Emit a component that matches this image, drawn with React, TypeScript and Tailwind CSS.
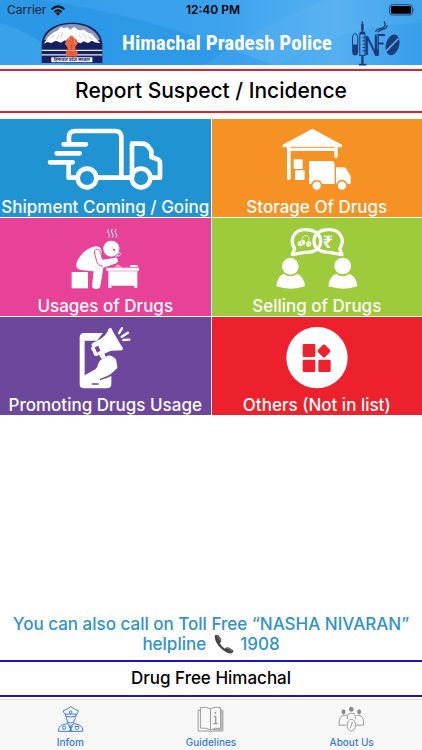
import type { ReactNode } from "react";

function StatusBar() {
  return (
    <div className="grid h-5 grid-cols-3 items-center px-[7px] text-xs leading-5 text-[#14202c]">
      <div className="flex items-center gap-[5px]">
        <span>Carrier</span>
        <svg viewBox="0 0 42 33" className="h-[11px] w-[14px]" fill="none" stroke="#111" strokeWidth="6" aria-hidden="true">
          <path d="M2 13 Q21 -5 40 13" />
          <path d="M10 21 Q21 11 32 21" />
          <path d="M14 25 Q21 19 28 25 L21 32Z" fill="#111" stroke="none" />
        </svg>
      </div>
      <span className="pl-1 text-center font-semibold text-black">12:40 PM</span>
      <svg viewBox="0 0 78 36" className="h-3 w-[26px] justify-self-end" aria-hidden="true">
        <rect x="2" y="2" width="68" height="31" rx="8" fill="none" stroke="#1c4a70" strokeWidth="3" />
        <rect x="6" y="6" width="60" height="23" rx="4" fill="#000" />
        <path d="M73 12 Q78 17 73 23Z" fill="#1c4a70" />
      </svg>
    </div>
  );
}

function Emblem() {
  return (
    <svg viewBox="124 61 187 123" className="h-[41px] w-[62px]" role="img" aria-label="Himachal Pradesh emblem">
      <path d="M126 184 V128 C128 84 170 63 218 63 C267 63 307 85 309 128 V184Z" fill="#17205f" />
      <path d="M133 116 C142 84 178 67 218 67 C258 67 293 86 302 116Z" fill="#8c95b6" />
      <path d="M132 127 L145 107 L154 98 L164 91 L173 87 L184 75 L193 79 L204 77 L213 84 L224 75 L235 84 L245 86 L253 83 L266 93 L277 96 L289 110 L303 125 L286 122 L277 117 L266 124 L253 119 L244 125 L230 120 L218 126 L196 116 L184 123 L169 117 L155 124 L143 121Z" fill="#fff" />
      <path d="M155 108 L164 101 M170 112 L181 98 M183 109 L190 90 M237 99 L246 109 M249 93 L262 111 M267 105 L280 114" stroke="#a9b0c8" strokeWidth="2" />
      <path d="M126 146 H309 M126 160 H309" stroke="#e8edff" strokeWidth="4" />
      <path d="M199 165 V149 L205 143 L201 132 L196 127 L200 114 L208 109 L212 102 H219 L224 109 L232 114 L235 126 L229 133 L227 144 L234 150 V165Z" fill="#ef653e" />
      <path d="M204 117 L210 124 M228 116 L222 124 M207 132 H226 M212 108 V120 M220 109 V120 M203 152 H230 M208 158 H225 M216 130 V145" stroke="#c04d35" strokeWidth="2" />
      <path d="M208 112 L213 116 M224 116 L227 126 M206 126 V132 M208 147 H225" stroke="#ffc0a1" strokeWidth="2" />
      <rect x="155" y="167" width="124" height="15" fill="#f2f5ff" />
      <text x="217" y="179" textAnchor="middle" fontSize="13" fontWeight="700" fill="#17205f" className="font-['Noto_Sans_Devanagari','Noto_Sans',sans-serif]">हिमाचल प्रदेश सरकार</text>
    </svg>
  );
}

function InfoLogo() {
  return (
    <svg viewBox="421 57 147 139" className="h-[46px] w-[49px]" role="img" aria-label="Info" fill="none" stroke="#1b3b79">
      <path d="M425 132 V111 C425 94 441 94 441 111 V132" strokeWidth="3" />
      <path d="M424 131 H442 V153 C442 168 424 168 424 153Z" fill="#1b3b79" stroke="none" />
      <path d="M455 61 V94" strokeWidth="4" />
      <path d="M455 69 V89 M447 96 H463 M455 165 V190" strokeWidth="7" />
      <rect x="447" y="99" width="16" height="65" strokeWidth="3" />
      <path d="M455 110 H463 M455 120 H463 M455 130 H463 M455 140 H463 M455 150 H463" strokeWidth="3" />
      <path d="M444 192 H467" strokeWidth="5" />
      <text x="459" y="164" fontSize="76" fontWeight="400" fill="#1b3b79" stroke="none" className="font-['Roboto_Condensed',sans-serif]">N</text>
      <path d="M494 102 H503 V164 H494Z" strokeWidth="3" />
      <path d="M494 146 H503 V163 H494Z" fill="#1b3b79" />
      <path d="M503 102 H523 M503 128 H519" strokeWidth="6" />
      <path d="M495 93 C497 78 520 88 523 73 C526 64 518 68 522 61 M502 94 C507 82 531 88 529 73" strokeWidth="4" />
      <ellipse cx="546" cy="132" rx="20" ry="32" transform="rotate(15 546 132)" fill="#1b3b79" stroke="none" />
      <path d="M527 151 L564 113" stroke="#57b0ee" strokeWidth="5" />
    </svg>
  );
}

const tileIcon = "h-16 w-[120px] shrink-0";

function ShipmentIcon() {
  return (
    <svg viewBox="135 36 360 192" className={tileIcon} fill="none" stroke="#fff" strokeWidth="14" strokeLinecap="round" strokeLinejoin="round" aria-hidden="true">
      <path d="M207 84 V67 Q207 48 226 48 H345 Q364 48 364 67 V188 M191 88 H258 M170 115 H239 M150 142 H218 M206 142 V188 H230" />
      <path d="M294 188 H390 M396 188 V86 H425 Q440 86 448 99 L454 107 V126 L469 131 Q480 134 480 145 V188 H455" />
      <circle cx="261" cy="189" r="28" />
      <circle cx="423" cy="189" r="28" />
    </svg>
  );
}

function StorageIcon() {
  return (
    <svg viewBox="136 36 360 192" className={tileIcon} fill="#fff" aria-hidden="true">
      <path d="M302 41 L391 89 V97 H378 V126 Q373 133 368 126 V108 H237 V191 Q231 198 226 191 V97 H213 V89Z" />
      <path d="M237 97 H368" stroke="#f7932a" strokeWidth="3" />
      <rect x="246" y="133" width="27" height="29" rx="3" />
      <rect x="250" y="166" width="29" height="29" rx="3" />
      <path d="M295 138 H357 Q369 138 369 151 V207 H292 V141 Q292 138 295 138Z" />
      <path d="M373 157 H397 Q401 157 404 162 L417 183 V207 H373Z" />
      <g stroke="#f7932a" strokeWidth="5">
        <circle cx="315" cy="212" r="15" />
        <circle cx="391" cy="212" r="15" />
      </g>
    </svg>
  );
}

function UsageIcon() {
  return (
    <svg viewBox="135 33 360 192" className={tileIcon} fill="#fff" aria-hidden="true">
      <path d="M326 42 Q320 49 326 56 Q332 62 325 68 M337 42 Q331 49 337 56 Q343 62 336 68 M348 42 Q342 49 348 56 Q354 62 347 68" fill="none" stroke="#fff" strokeWidth="3" />
      <circle cx="334" cy="101" r="24" />
      <circle cx="342" cy="104" r="3" fill="#b53278" />
      <path d="M352 117 Q361 109 362 118 Q357 127 351 121 L345 131" fill="none" stroke="#fff" strokeWidth="3" />
      <path d="M289 94 C268 94 239 118 230 142 C225 158 234 165 247 166 L281 169 L276 214 Q278 222 289 222 Q299 222 301 214 L310 158 L349 145 Q357 138 352 131 Q347 126 338 130 L307 134 L304 104 Q299 94 289 94Z" />
      <path d="M283 111 C286 99 299 101 302 113 L307 132 M283 111 L290 139 Q293 151 309 154" stroke="#e8439a" strokeWidth="3" fill="none" />
      <rect x="215" y="171" width="49" height="49" />
      <path d="M319 158 H417 V168 H412 V219 H403 V212 H334 V219 H325 V168 H319Z" />
      <path d="M340 158 L353 148 L369 158Z" fill="#f7a6cf" />
      <path d="M325 168 H411 M374 157 H416" stroke="#ee80b8" strokeWidth="2" />
      <rect x="390" y="150" width="23" height="6" rx="2" />
    </svg>
  );
}

function SellingIcon() {
  return (
    <svg viewBox="136 33 360 192" className={tileIcon} fill="#fff" aria-hidden="true">
      <g fill="none" stroke="#fff" strokeWidth="10" strokeLinejoin="round">
        <path d="M281 44 C307 44 327 56 327 79 C327 103 304 114 280 112 L242 119 L249 101 C232 75 246 44 281 44Z" />
        <path d="M352 44 C326 44 307 56 307 79 C307 103 329 113 353 112 L391 119 L384 101 C402 75 387 44 352 44Z" />
      </g>
      <rect x="257" y="77" width="24" height="15" rx="7" transform="rotate(-25 269 84)" />
      <circle cx="291" cy="87" r="8" />
      <path d="M270 77 Q271 62 284 61 Q296 67 291 80" stroke="#fff" strokeWidth="2" fill="none" />
      <path d="M268 78 L273 91 M284 87 H298" stroke="#9bca3b" strokeWidth="2" />
      <text x="349" y="100" textAnchor="middle" fontSize="54" fontWeight="700" className="font-['Noto_Sans',sans-serif]">₹</text>
      <circle cx="236" cy="154" r="25" />
      <circle cx="393" cy="153" r="25" />
      <path d="M216 177 Q236 191 256 177 C271 181 280 201 280 214 Q239 228 194 214 C196 198 202 181 216 177Z" />
      <path d="M373 177 Q393 191 413 177 C428 181 437 201 437 214 Q396 228 350 214 C352 198 359 181 373 177Z" />
    </svg>
  );
}

function PromotionIcon() {
  return (
    <svg viewBox="135 30 360 192" className={tileIcon} fill="#fff" aria-hidden="true">
      <path d="M252 54 H309 L291 77 H254 V184 L300 190 H318 L334 180 V207 Q334 220 320 220 H252 Q239 220 239 207 V68 Q239 54 252 54Z" />
      <path d="M254 181 L286 163 Q294 156 294 148 Q297 137 309 130 L327 121 Q346 126 349 137 L352 159 L332 178 L299 195 H254Z" />
      <path d="M352 163 L333 181 L300 194" fill="none" stroke="#6d479c" strokeWidth="4" />
      <path d="M277 207 H294" stroke="#6d479c" strokeWidth="5" strokeLinecap="round" />
      <path d="M331 38 Q336 39 338 48 L363 91 Q372 100 366 106 Q352 107 333 107 L313 116 L318 126 L305 132 L297 119 Q289 126 282 121 L279 110 Q268 101 277 94 Q270 87 282 82 L295 76 Q321 61 325 43Z" />
      <path d="M284 97 L295 92 L301 107 L291 113Z" fill="#6d479c" />
      <path d="M357 54 L366 40 M365 65 L384 53 M370 75 L388 74" stroke="#fff" strokeWidth="7" strokeLinecap="round" />
    </svg>
  );
}

function OthersIcon() {
  return (
    <svg viewBox="136 30 360 192" className={tileIcon} fill="#ed222d" aria-hidden="true">
      <circle cx="316" cy="128" r="92" fill="#fff" />
      <rect x="273" y="87" width="38" height="39" rx="4" />
      <rect x="273" y="134" width="38" height="37" rx="4" />
      <rect x="320" y="134" width="37" height="37" rx="4" />
      <rect x="322" y="93" width="30" height="30" rx="4" transform="rotate(45 337 108)" />
    </svg>
  );
}

function OfficerIcon() {
  return (
    <svg viewBox="170 317 81 80" className="h-[26px] w-[27px]" fill="none" stroke="#3478e5" strokeWidth="3" strokeLinejoin="round" aria-hidden="true">
      <path d="M188 332 Q201 327 211 319 Q222 327 235 332 Q235 339 229 342 H194 Q188 337 188 332Z M195 341 V348 Q211 354 228 348 V341" />
      <circle cx="211" cy="336" r="4" />
      <path d="M198 350 V356 Q200 368 211 370 Q223 367 225 356 V350 M202 366 V371 L183 376 Q173 380 173 395 H249 Q249 380 239 376 L221 371 V366 M202 371 L211 379 L221 371 M211 379 V395 M204 376 L211 387 L218 376" />
      <circle cx="191" cy="384" r="5" />
      <path d="M225 380 H236 V386 L230 390 L225 386Z M207 382 L215 394 M215 382 L207 394" />
    </svg>
  );
}

function GuideIcon() {
  return (
    <svg viewBox="592 317 82 80" className="h-[26px] w-[27px]" fill="none" stroke="#999" strokeWidth="3" strokeLinejoin="round" aria-hidden="true">
      <path d="M633 325 Q618 318 602 322 V385 Q619 383 633 391 Q647 383 664 386 V322 Q648 318 633 325 V391" />
      <path d="M602 330 H595 V394 H627 Q633 399 639 394 H671 V330 H664 M668 332 V390 H642" />
      <circle cx="648" cy="338" r="3" fill="#999" stroke="none" />
      <path d="M643 349 H649 V370 M642 371 H655" strokeWidth="4" />
    </svg>
  );
}

function PeopleIcon() {
  return (
    <svg viewBox="381 317 81 80" className="h-[26px] w-[27px]" fill="none" stroke="#999" strokeWidth="3" aria-hidden="true">
      <g fill="#888" stroke="none">
        <ellipse cx="421" cy="327" rx="7" ry="8" />
        <ellipse cx="397" cy="335" rx="6" ry="8" />
        <ellipse cx="445" cy="335" rx="6" ry="8" />
      </g>
      <path d="M409 357 V347 Q410 339 421 339 Q432 339 433 347 V357 M407 347 Q401 344 391 348 Q383 354 383 376 H405 M436 347 Q443 344 451 348 Q459 354 459 376 H436" />
      <ellipse cx="421" cy="376" rx="13" ry="18" />
      <path d="M424 366 L418 386" />
    </svg>
  );
}

const tiles: { label: string; color: string; icon: ReactNode }[] = [
  { label: "Shipment Coming / Going", color: "bg-[#2094d2]", icon: <ShipmentIcon /> },
  { label: "Storage Of Drugs", color: "bg-[#f69223]", icon: <StorageIcon /> },
  { label: "Usages of Drugs", color: "bg-[#e74298]", icon: <UsageIcon /> },
  { label: "Selling of Drugs", color: "bg-[#9dcb3b]", icon: <SellingIcon /> },
  { label: "Promoting Drugs Usage", color: "bg-[#6d479c]", icon: <PromotionIcon /> },
  { label: "Others (Not in list)", color: "bg-[#ed212c]", icon: <OthersIcon /> },
];

const tabs: { label: string; icon: ReactNode }[] = [
  { label: "Infom", icon: <OfficerIcon /> },
  { label: "Guidelines", icon: <GuideIcon /> },
  { label: "About Us", icon: <PeopleIcon /> },
];

export default function App() {
  return (
    <div className="flex min-h-screen flex-col bg-white font-['Inter',sans-serif] text-black">
      <header className="relative isolate h-[65px] bg-[#2d9aec]">
        <svg viewBox="0 0 422 65" preserveAspectRatio="none" className="absolute inset-0 -z-10 h-full w-full" aria-hidden="true">
          <defs>
            <linearGradient id="sky" x1="0" y1="0" x2="1" y2="0">
              <stop offset="0" stopColor="#349eea" />
              <stop offset="0.5" stopColor="#3ba2ee" />
              <stop offset="0.8" stopColor="#55b0f1" />
              <stop offset="1" stopColor="#369eeb" />
            </linearGradient>
          </defs>
          <rect width="422" height="65" fill="url(#sky)" />
          <path d="M0 0 H40 Q150 15 272 65 H0Z" fill="#168be0" opacity="0.35" />
          <path d="M0 23 Q40 34 65 65 H0Z" fill="#69bbf3" opacity="0.25" />
          <path d="M205 65 Q270 18 330 0 H422 V23 Q340 25 280 65Z" fill="#7bc5f6" opacity="0.15" />
        </svg>
        <StatusBar />
        <div className="flex h-[45px] items-center justify-between pr-[22px] pl-[41px]">
          <Emblem />
          <h1 className="font-['Roboto_Condensed','Liberation_Sans',sans-serif] text-[21px] leading-6 font-bold whitespace-nowrap text-white">Himachal Pradesh Police</h1>
          <InfoLogo />
        </div>
      </header>

      <h2 className="mt-1 border-y-2 border-[#e5202b] text-center text-[21px] leading-10 font-medium">Report Suspect / Incidence</h2>

      <main className="mt-1.5 grid grid-cols-2 gap-px">
        {tiles.map(({ label, color, icon }) => (
          <button key={label} type="button" className={`flex h-[98px] min-w-0 flex-col items-center justify-between pt-2 text-[17px] leading-5 font-medium whitespace-nowrap text-white ${color}`}>
            {icon}
            <span>{label}</span>
          </button>
        ))}
      </main>

      <p className="mt-auto mb-1.5 px-2 pt-4 text-center text-[17px] leading-5 font-medium text-[#2f93c9]">
        You can also call on Toll Free “NASHA NIVARAN”
        <br />
        <span className="inline-flex items-center">
          helpline
          <svg viewBox="7 98 65 63" className="mr-1.5 ml-2 h-5 w-5" aria-hidden="true">
            <path d="M10 101 Q20 95 28 110 Q34 121 26 126 Q29 136 42 145 Q46 137 55 141 L69 150 Q73 156 62 160 C41 161 5 125 10 101Z" fill="#454545" />
            <path d="M17 103 Q25 109 27 119 M49 143 Q58 144 65 152" fill="none" stroke="#888" strokeWidth="3" />
          </svg>
          <a href="tel:1908">1908</a>
        </span>
      </p>

      <p className="mb-0.5 border-y-2 border-[#1c16c9] text-center text-[17px] leading-[33px] font-medium">Drug Free Himachal</p>

      <nav className="grid h-[51px] grid-cols-3 border-t border-[#d8d8d8] bg-[#f8f8f8]">
        {tabs.map(({ label, icon }) => (
          <button key={label} type="button" className="flex flex-col items-center gap-1 pt-1.5 text-[10px] leading-3 font-medium text-[#3478e5]">
            {icon}
            <span>{label}</span>
          </button>
        ))}
      </nav>
    </div>
  );
}
